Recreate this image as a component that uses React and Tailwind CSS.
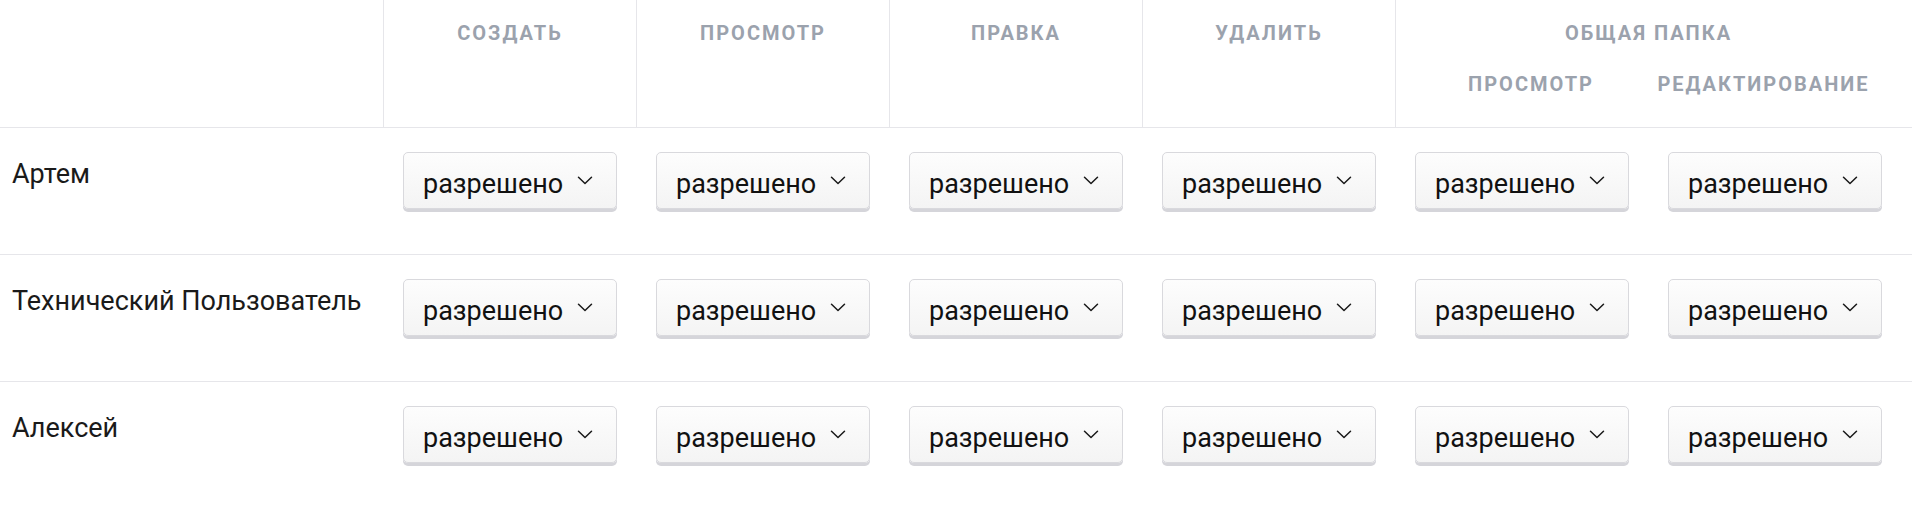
import React from "react";

const users = ["Артем", "Технический Пользователь", "Алексей"];

function Chevron() {
  return (
    <svg width="16" height="9" viewBox="0 0 16 9" fill="none" className="shrink-0">
      <path d="M1.5 1.2 L8 7.5 L14.5 1.2" stroke="#1a1a1a" strokeWidth="1.5" strokeLinecap="round" strokeLinejoin="round" />
    </svg>
  );
}

function SelectBtn() {
  return (
    <div className="flex h-[57px] w-[214px] items-center justify-between rounded-[5px] border border-[#d9d9dd] bg-gradient-to-b from-[#fdfdfd] to-[#f4f4f4] pl-[19px] pr-[23px] shadow-[0_3px_0_#d5d5da]">
      <span className="whitespace-nowrap pt-[6px] text-[27px] leading-[40px] text-[#111] [font-family:'Roboto',sans-serif]">разрешено</span>
      <Chevron />
    </div>
  );
}

const headCls =
  "whitespace-nowrap text-center text-[20px] font-bold uppercase leading-[24px] tracking-[2px] text-[#9ba2ad] [font-family:'Roboto',sans-serif]";

export default function App() {
  return (
    <div className="w-[1912px] bg-white">
      {/* header */}
      <div className="flex h-[128px] border-b border-[#e6e6ea]">
        <div className="w-[383px] shrink-0" />
        {["Создать", "Просмотр", "Правка", "Удалить"].map((h) => (
          <div key={h} className="w-[253px] shrink-0 border-l border-[#e6e6ea] pt-[21px]">
            <div className={headCls}>{h}</div>
          </div>
        ))}
        <div className="flex-1 border-l border-[#e6e6ea] pt-[21px] pr-[11px]">
          <div className={headCls}>Общая папка</div>
          <div className="mt-[27px] flex pl-[15px]">
            <div className={"w-[240px] " + headCls}>Просмотр</div>
            <div className={"w-[225px] " + headCls}>Редактирование</div>
          </div>
        </div>
      </div>
      {/* rows */}
      {users.map((u) => (
        <div key={u} className="flex h-[127px] border-b border-[#e6e6ea] last:border-b-0">
          <div className="w-[383px] shrink-0 whitespace-nowrap pl-[12px] pt-[26px] text-[27px] leading-[40px] text-[#1a1a1a] [font-family:'Roboto',sans-serif]">
            {u}
          </div>
          {[0, 1, 2, 3, 4, 5].map((i) => (
            <div key={i} className="w-[253px] shrink-0 pl-[20px] pt-[24px]">
              <SelectBtn />
            </div>
          ))}
        </div>
      ))}
    </div>
  );
}
